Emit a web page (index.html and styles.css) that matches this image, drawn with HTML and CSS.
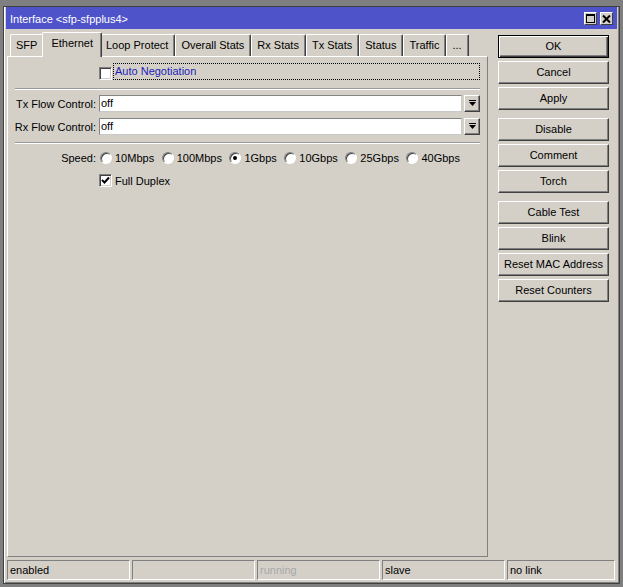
FILE: index.html
```html
<!DOCTYPE html>
<html lang="en">
<head>
    <meta charset="UTF-8">
    <meta name="viewport" content="width=device-width, initial-scale=1.0">
    <title>Interface &lt;sfp-sfpplus4&gt;</title>
    <link rel="stylesheet" href="styles.css">
</head>
<body>
    <div class="window">
        <!-- Title bar -->
        <div class="titlebar">
            <span class="title">Interface &lt;sfp-sfpplus4&gt;</span>
            <div class="title-buttons">
                <span class="tbtn">
                    <svg width="9" height="9" viewBox="0 0 9 9"><rect x="0.5" y="0.5" width="8" height="8" fill="none" stroke="#000"/><rect x="0" y="0" width="9" height="2" fill="#000"/></svg>
                </span>
                <span class="tbtn">
                    <svg width="9" height="8" viewBox="0 0 9 8"><path d="M1 0.5 L8 7.5 M8 0.5 L1 7.5" stroke="#000" stroke-width="2"/></svg>
                </span>
            </div>
        </div>

        <div class="main">
            <div class="left">
                <!-- Tabs -->
                <div class="tabs">
                    <div class="tab">SFP</div>
                    <div class="tab active">Ethernet</div>
                    <div class="tab">Loop Protect</div>
                    <div class="tab">Overall Stats</div>
                    <div class="tab">Rx Stats</div>
                    <div class="tab">Tx Stats</div>
                    <div class="tab">Status</div>
                    <div class="tab">Traffic</div>
                    <div class="tab">...</div>
                </div>

                <!-- Ethernet tab -->
                <div class="panel">
                    <div class="row">
                        <span class="label"></span>
                        <span class="checkbox low"></span>
                        <span class="focus">Auto Negotiation</span>
                    </div>

                    <div class="sep"></div>

                    <div class="row">
                        <span class="label">Tx Flow Control:</span>
                        <div class="select">
                            <span class="field">off</span>
                            <span class="drop">
                                <svg width="7" height="7" viewBox="0 0 7 7"><rect x="0" y="0" width="7" height="1" fill="#000"/><path d="M0 2 H7 L3.5 6 Z" fill="#000"/></svg>
                            </span>
                        </div>
                    </div>
                    <div class="row gap">
                        <span class="label">Rx Flow Control:</span>
                        <div class="select">
                            <span class="field">off</span>
                            <span class="drop">
                                <svg width="7" height="7" viewBox="0 0 7 7"><rect x="0" y="0" width="7" height="1" fill="#000"/><path d="M0 2 H7 L3.5 6 Z" fill="#000"/></svg>
                            </span>
                        </div>
                    </div>

                    <div class="sep sep2"></div>

                    <div class="row">
                        <span class="label">Speed:</span>
                        <div class="radios">
                            <span class="opt"><span class="radio"></span>10Mbps</span>
                            <span class="opt"><span class="radio"></span>100Mbps</span>
                            <span class="opt"><span class="radio checked"></span>1Gbps</span>
                            <span class="opt"><span class="radio"></span>10Gbps</span>
                            <span class="opt"><span class="radio"></span>25Gbps</span>
                            <span class="opt"><span class="radio"></span>40Gbps</span>
                        </div>
                    </div>
                    <div class="row gap">
                        <span class="label"></span>
                        <span class="checkbox">
                            <svg width="9" height="9" viewBox="0 0 9 9"><path d="M1 4 L3.5 6.5 L8 1.5" fill="none" stroke="#000" stroke-width="2"/></svg>
                        </span>
                        <span class="check-text">Full Duplex</span>
                    </div>
                </div>
            </div>

            <!-- Buttons -->
            <div class="actions">
                <div class="btn default">OK</div>
                <div class="btn">Cancel</div>
                <div class="btn">Apply</div>
                <div class="btn group">Disable</div>
                <div class="btn">Comment</div>
                <div class="btn">Torch</div>
                <div class="btn group">Cable Test</div>
                <div class="btn">Blink</div>
                <div class="btn">Reset MAC Address</div>
                <div class="btn">Reset Counters</div>
            </div>
        </div>

        <!-- Status bar -->
        <div class="statusbar">
            <div class="cell">enabled</div>
            <div class="cell"></div>
            <div class="cell dim">running</div>
            <div class="cell">slave</div>
            <div class="cell">no link</div>
        </div>
    </div>
</body>
</html>
```

FILE: styles.css
```css
* {
    box-sizing: border-box;
}
body {
    margin: 0;
    background: #7f7f7f;
    font-family: "Liberation Sans", Arial, sans-serif;
    font-size: 11px;
    color: #000;
}
.window {
    margin: 6px 3px 0;
    width: 617px;
    height: 578px;
    padding: 0 2px;
    border: 1px solid #404040;
    background: #d4d0c8;
    box-shadow: inset 1px 0 #fff, inset -1px -1px #808080;
    display: flex;
    flex-direction: column;
}
.titlebar {
    height: 22px;
    flex: none;
    padding: 1px 4px 0;
    background: #4e53c9;
    color: #fff;
    display: flex;
    align-items: center;
}
.title-buttons {
    margin-left: auto;
    display: flex;
    gap: 3px;
}
.tbtn {
    width: 13px;
    height: 13px;
    background: #d4d0c8;
    border: 1px solid;
    border-color: #fff #404040 #404040 #fff;
    display: flex;
    align-items: center;
    justify-content: center;
}
.main {
    height: 528px;
    flex: none;
    padding-top: 3px;
    margin-left: 1px;
    display: flex;
}
.left {
    width: 481px;
    display: flex;
    flex-direction: column;
}
.tabs {
    height: 24px;
    padding-left: 3px;
    display: flex;
    align-items: flex-end;
}
.tab {
    height: 22px;
    padding: 0 6px 0 5px;
    line-height: 21px;
    white-space: nowrap;
    border: 1px solid;
    border-bottom: none;
    border-color: #fff #404040 #fff #fff;
    border-radius: 2px 2px 0 0;
    box-shadow: inset -1px 0 #808080;
    background: #d4d0c8;
}
.tab.active {
    height: 25px;
    margin: 0 -2px -1px;
    padding: 0 8px;
    line-height: 21px;
    position: relative;
    z-index: 1;
}
.panel {
    flex: 1;
    padding: 6px 7px 0 4px;
    border: 1px solid;
    border-color: #fff #808080 #808080 #fff;
}
.row {
    height: 17px;
    display: flex;
    align-items: center;
}
.row.gap {
    margin-top: 6px;
}
.label {
    width: 84px;
    margin-right: 3px;
    flex: none;
    text-align: right;
    white-space: nowrap;
}
.checkbox {
    width: 13px;
    height: 13px;
    flex: none;
    background: #fff;
    border: 1px solid;
    border-color: #808080 #fff #fff #808080;
    box-shadow: inset 1px 1px #404040, inset -1px -1px #d4d0c8;
    display: flex;
    align-items: center;
    justify-content: center;
}
.checkbox.low {
    align-self: flex-end;
}
.focus {
    flex: 1;
    height: 17px;
    margin-left: 1px;
    padding-left: 1px;
    line-height: 15px;
    border: 1px dotted #000;
    color: #1c1cb8;
}
.check-text {
    margin-left: 3px;
}
.sep {
    height: 2px;
    margin: 8px 0 5px 3px;
    border-top: 1px solid #9a9a9a;
    border-bottom: 1px solid #fff;
}
.sep2 {
    margin: 7px 0 5px 3px;
}
.select {
    flex: 1;
    display: flex;
    gap: 2px;
}
.field {
    flex: 1;
    height: 17px;
    padding-left: 1px;
    line-height: 15px;
    background: #fff;
    border: 1px solid;
    border-color: #858585 #c8c8c8 #c8c8c8 #858585;
}
.drop {
    width: 16px;
    height: 17px;
    border: 1px solid;
    border-color: #fff #404040 #404040 #fff;
    box-shadow: inset -1px -1px #808080;
    display: flex;
    align-items: center;
    justify-content: center;
}
.radios {
    margin-left: 1px;
    display: flex;
    gap: 7.5px;
}
.opt {
    display: flex;
    align-items: center;
    gap: 3px;
}
.radio {
    width: 12px;
    height: 12px;
    border-radius: 50%;
    background: #fff;
    border: 1px solid;
    border-color: #808080 #fff #fff #808080;
    box-shadow: inset 1px 1px #404040;
    display: flex;
    align-items: center;
    justify-content: center;
}
.radio.checked::after {
    content: "";
    width: 4px;
    height: 4px;
    border-radius: 50%;
    background: #000;
}
.actions {
    width: 111px;
    margin-left: 10px;
    padding-top: 3px;
    display: flex;
    flex-direction: column;
    gap: 3px;
}
.btn {
    height: 23px;
    line-height: 21px;
    text-align: center;
    border: 1px solid;
    border-color: #fff #404040 #404040 #fff;
    box-shadow: inset -1px -1px #808080;
}
.btn.default {
    border-color: #000;
    box-shadow: inset 1px 1px #fff, inset -1px -1px #404040, inset -2px -2px #808080;
}
.btn.group {
    margin-top: 5px;
}
.statusbar {
    height: 20px;
    margin: 3px 2px 0 1px;
    display: grid;
    grid-template-columns: repeat(4, 123px) 1fr;
    gap: 2px;
}
.cell {
    padding: 0 2px;
    line-height: 18px;
    white-space: nowrap;
    border: 1px solid;
    border-color: #808080 #fff #fff #808080;
}
.cell.dim {
    color: #a8a8a8;
}
```
